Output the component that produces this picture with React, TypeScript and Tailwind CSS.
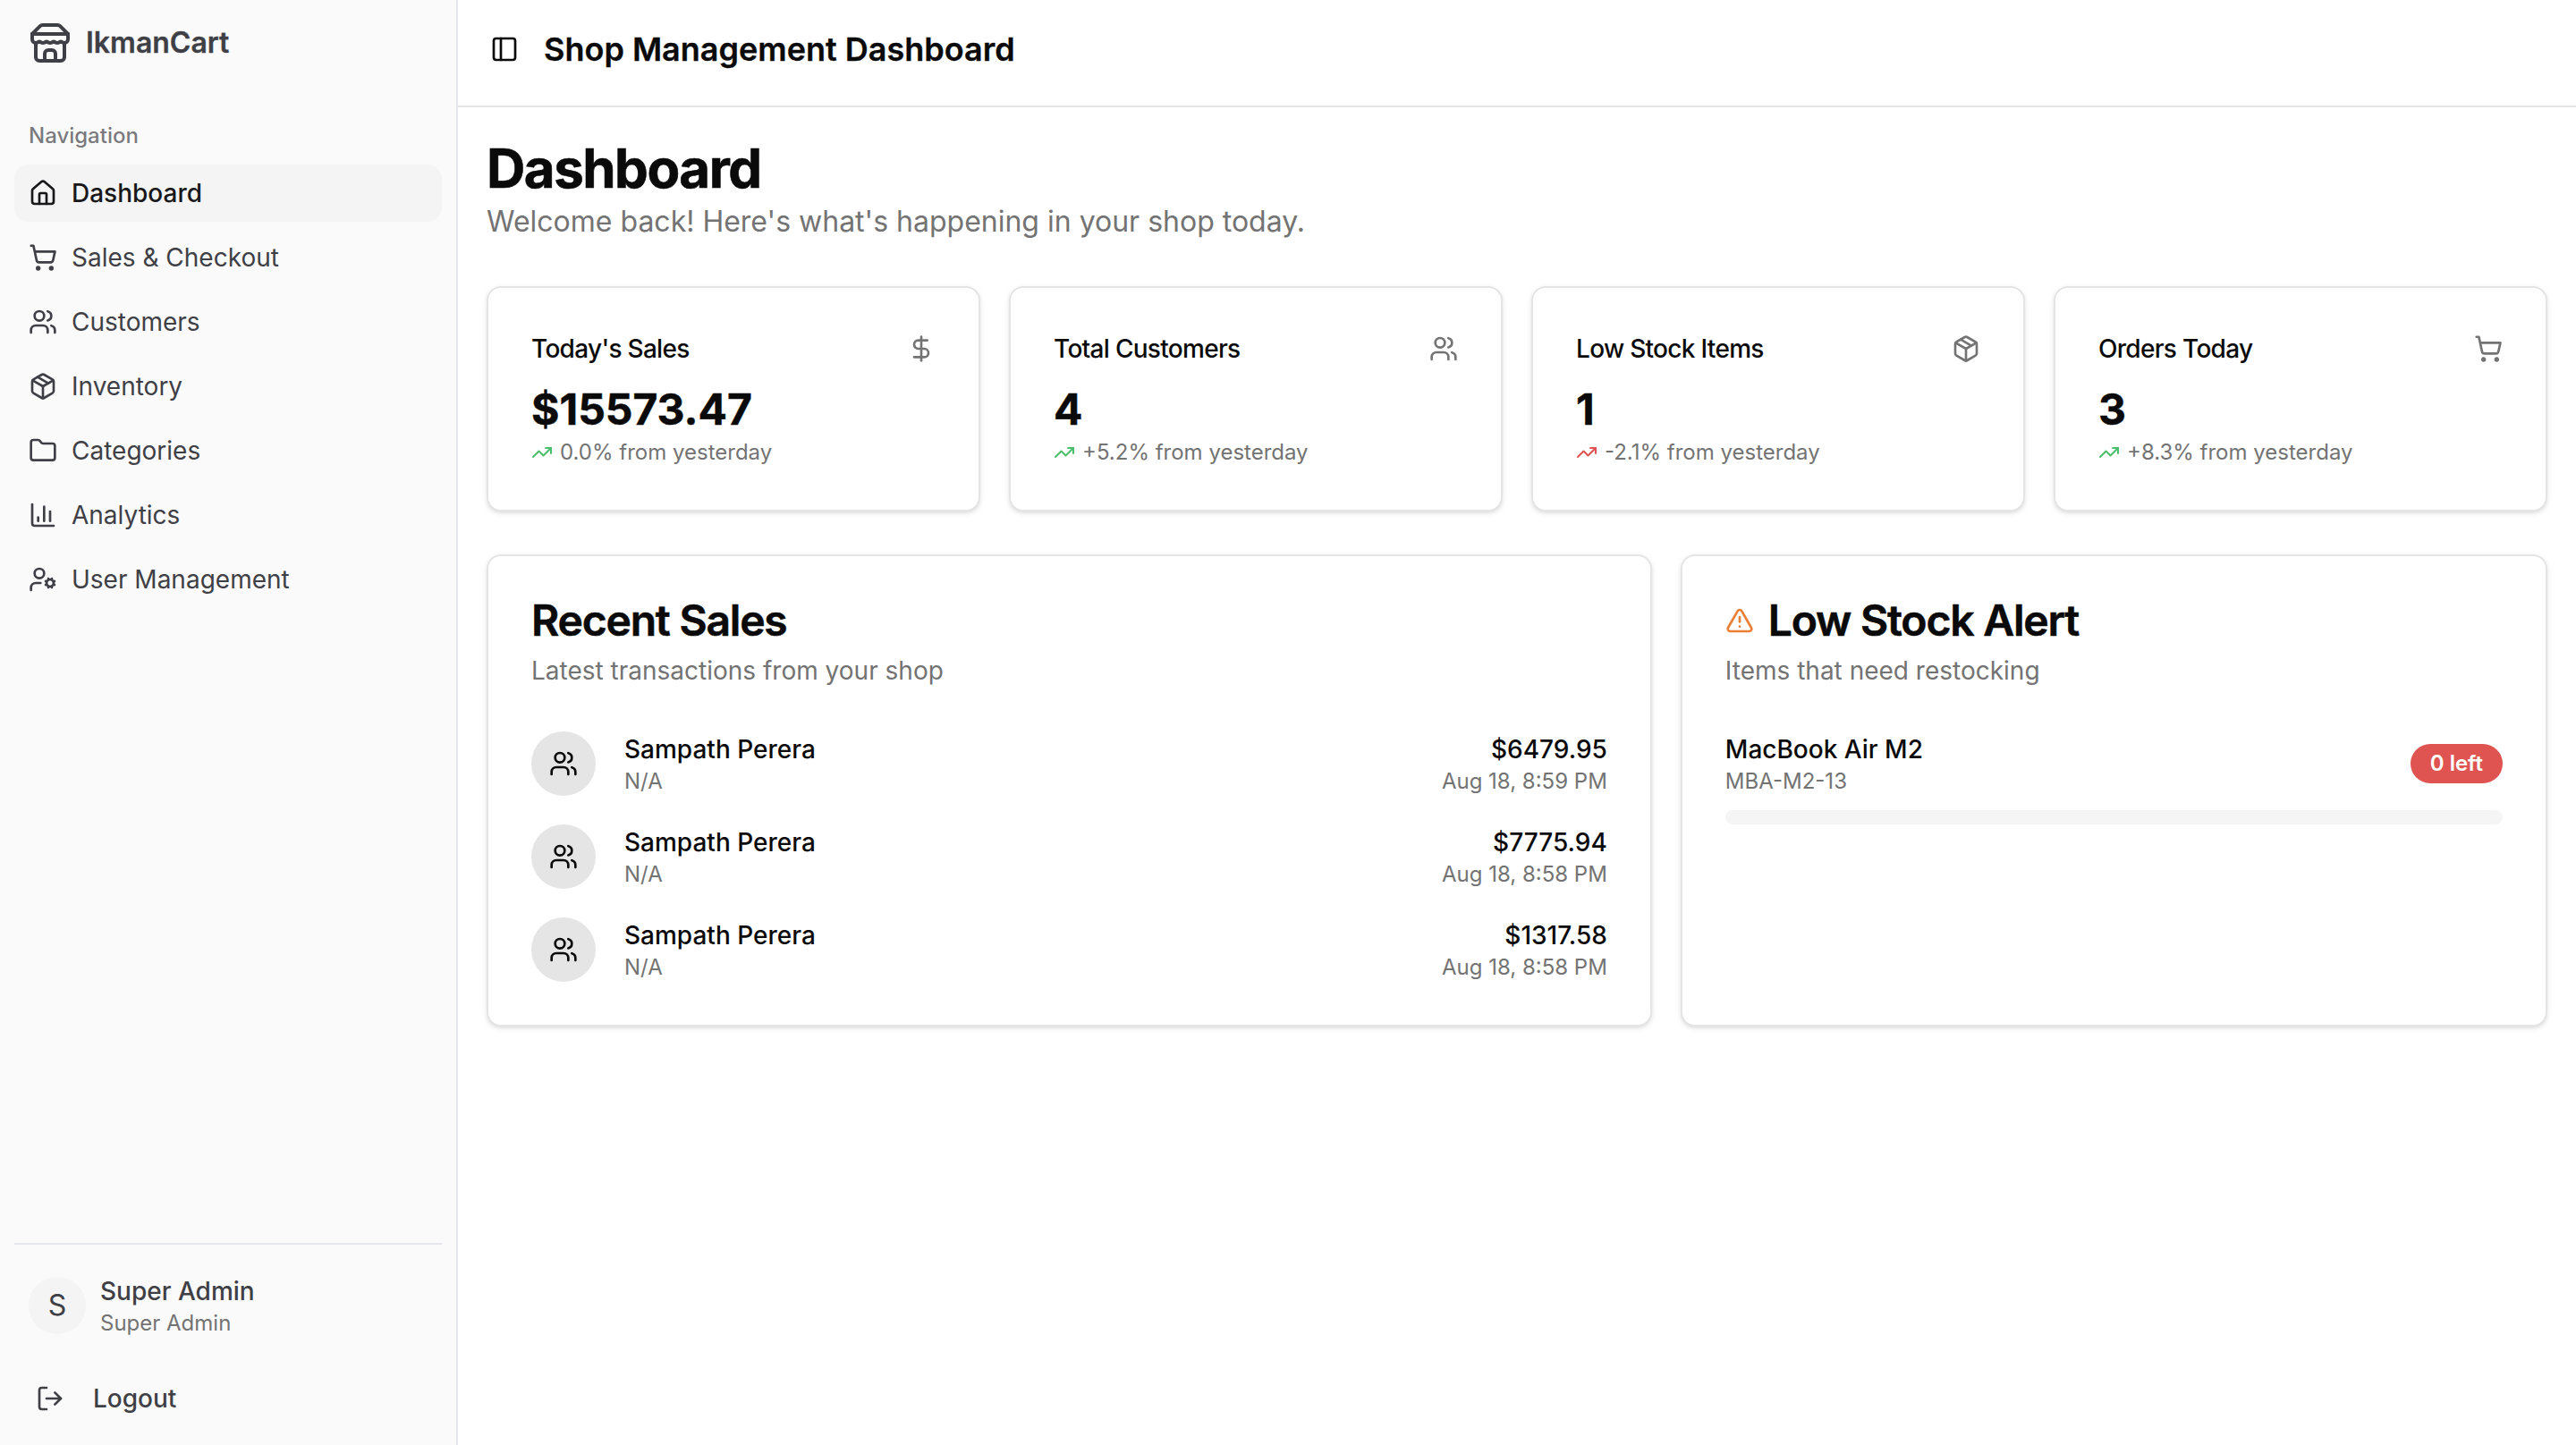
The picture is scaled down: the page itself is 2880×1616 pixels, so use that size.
import { House, ShoppingCart, Users, Package, Folder, ChartColumn, UserCog, LogOut, PanelLeft, DollarSign, TrendingUp, TriangleAlert } from "lucide-react";

const nav = [
  { label: "Dashboard", icon: House, active: true },
  { label: "Sales & Checkout", icon: ShoppingCart },
  { label: "Customers", icon: Users },
  { label: "Inventory", icon: Package },
  { label: "Categories", icon: Folder },
  { label: "Analytics", icon: ChartColumn },
  { label: "User Management", icon: UserCog },
];

const stats = [
  { title: "Today's Sales", value: "$15573.47", icon: DollarSign, trend: "0.0% from yesterday", color: "text-[#4cbf69]" },
  { title: "Total Customers", value: "4", icon: Users, trend: "+5.2% from yesterday", color: "text-[#4cbf69]" },
  { title: "Low Stock Items", value: "1", icon: Package, trend: "-2.1% from yesterday", color: "text-[#df5451]" },
  { title: "Orders Today", value: "3", icon: ShoppingCart, trend: "+8.3% from yesterday", color: "text-[#4cbf69]" },
];

const sales = [
  { amount: "$6479.95", date: "Aug 18, 8:59 PM" },
  { amount: "$7775.94", date: "Aug 18, 8:58 PM" },
  { amount: "$1317.58", date: "Aug 18, 8:58 PM" },
];

function StoreLogo() {
  return (
    <svg viewBox="0 0 24 24" className="w-6 h-6 shrink-0" fill="none" stroke="currentColor" strokeWidth="2" strokeLinecap="round" strokeLinejoin="round">
      <path d="m2 7 4.41-4.41A2 2 0 0 1 7.83 2h8.34a2 2 0 0 1 1.42.59L22 7" />
      <path d="M4 12v8a2 2 0 0 0 2 2h12a2 2 0 0 0 2-2v-8" />
      <path d="M15 22v-4a2 2 0 0 0-2-2h-2a2 2 0 0 0-2 2v4" />
      <path d="M2 7h20" />
      <path d="M22 7v3a2 2 0 0 1-2 2a2.7 2.7 0 0 1-1.59-.63.7.7 0 0 0-.82 0A2.7 2.7 0 0 1 16 12a2.7 2.7 0 0 1-1.59-.63.7.7 0 0 0-.82 0A2.7 2.7 0 0 1 12 12a2.7 2.7 0 0 1-1.59-.63.7.7 0 0 0-.82 0A2.7 2.7 0 0 1 8 12a2.7 2.7 0 0 1-1.59-.63.7.7 0 0 0-.82 0A2.7 2.7 0 0 1 4 12a2 2 0 0 1-2-2V7" />
    </svg>
  );
}

export default function App() {
  return (
    <div className="[zoom:2] w-[1440px] h-[808px] flex overflow-hidden bg-white text-[#0a0a0a] [font-family:Inter,sans-serif] antialiased">
      <aside className="w-64 shrink-0 h-full flex flex-col bg-[#fafafa] border-r border-[#e5e7eb] text-[#3f3f46]">
        <div className="h-[52px] px-4 pt-3 flex items-start gap-2">
          <StoreLogo />
          <span className="text-base leading-6 font-semibold [-webkit-text-stroke:0.15px_currentColor]">IkmanCart</span>
        </div>
        <div className="p-2 flex flex-col">
          <div className="h-8 px-2 flex items-center text-xs font-medium text-[#3f3f46]/70">Navigation</div>
          <nav className="flex flex-col gap-1">
            {nav.map((n) => (
              <div
                key={n.label}
                className={
                  n.active
                    ? "h-8 px-2 rounded-lg flex items-center gap-2 text-sm font-medium bg-[#f4f4f5] text-[#18181b]"
                    : "h-8 px-2 rounded-lg flex items-center gap-2 text-sm"
                }
              >
                <n.icon className="w-4 h-4 shrink-0" />
                <span>{n.label}</span>
              </div>
            ))}
          </nav>
        </div>
        <div className="mt-auto mx-2 mb-2 border-t border-[#e5e7eb] pt-4 flex flex-col gap-4">
          <div className="flex items-center gap-2 px-2">
            <div className="w-8 h-8 rounded-full bg-[#f4f4f5] flex items-center justify-center text-base">S</div>
            <div className="flex flex-col">
              <span className="text-sm font-medium">Super Admin</span>
              <span className="text-xs text-[#737373]">Super Admin</span>
            </div>
          </div>
          <div className="h-9 px-3 flex items-center gap-4 text-sm font-medium">
            <LogOut className="w-4 h-4" />
            <span>Logout</span>
          </div>
        </div>
      </aside>

      <div className="flex-1 min-w-0 flex flex-col">
        <header className="h-[60px] shrink-0 px-4 pb-1 flex items-center gap-2 border-b border-[#e5e5e5]">
          <div className="w-7 h-7 -ml-1 flex items-center justify-center">
            <PanelLeft className="w-4 h-4" />
          </div>
          <h2 className="text-lg font-semibold [-webkit-text-stroke:0.15px_currentColor]">Shop Management Dashboard</h2>
        </header>

        <main className="p-4 flex flex-col">
          <h1 className="text-3xl font-bold tracking-tight [-webkit-text-stroke:0.3px_currentColor]">Dashboard</h1>
          <p className="text-[#737373]">Welcome back! Here's what's happening in your shop today.</p>

          <div className="mt-6 grid grid-cols-4 gap-4">
            {stats.map((s) => (
              <div key={s.title} className="rounded-lg border border-[#e5e5e5] bg-white shadow-sm">
                <div className="px-6 pt-6 pb-2 flex items-center justify-between">
                  <span className="text-sm font-medium tracking-tight">{s.title}</span>
                  <s.icon className="w-4 h-4 text-[#737373]" />
                </div>
                <div className="px-6 pb-6">
                  <div className="text-2xl font-bold [-webkit-text-stroke:0.25px_currentColor]">{s.value}</div>
                  <div className="flex items-center text-xs text-[#737373]">
                    <TrendingUp className={`w-3 h-3 mr-1 ${s.color}`} />
                    <span>{s.trend}</span>
                  </div>
                </div>
              </div>
            ))}
          </div>

          <div className="mt-6 grid grid-cols-7 gap-4">
            <div className="col-span-4 rounded-lg border border-[#e5e5e5] bg-white shadow-sm">
              <div className="p-6 flex flex-col gap-1.5">
                <h3 className="text-2xl leading-none font-semibold tracking-tight [-webkit-text-stroke:0.3px_currentColor]">Recent Sales</h3>
                <p className="text-sm text-[#737373]">Latest transactions from your shop</p>
              </div>
              <div className="px-6 pb-6 flex flex-col gap-4">
                {sales.map((s) => (
                  <div key={s.amount} className="flex items-center">
                    <div className="w-9 h-9 rounded-full bg-[#e5e5e5] flex items-center justify-center">
                      <Users className="w-4 h-4" />
                    </div>
                    <div className="ml-4 flex flex-col">
                      <span className="text-sm font-medium">Sampath Perera</span>
                      <span className="text-xs text-[#737373]">N/A</span>
                    </div>
                    <div className="ml-auto flex flex-col items-end">
                      <span className="text-sm font-medium">{s.amount}</span>
                      <span className="text-xs text-[#737373]">{s.date}</span>
                    </div>
                  </div>
                ))}
              </div>
            </div>

            <div className="col-span-3 rounded-lg border border-[#e5e5e5] bg-white shadow-sm">
              <div className="p-6 flex flex-col gap-1.5">
                <h3 className="text-2xl leading-none font-semibold tracking-tight flex items-center gap-2 [-webkit-text-stroke:0.3px_currentColor]">
                  <TriangleAlert className="w-4 h-4 text-[#ea7f35] [-webkit-text-stroke:0]" />
                  Low Stock Alert
                </h3>
                <p className="text-sm text-[#737373]">Items that need restocking</p>
              </div>
              <div className="px-6 pb-6 flex flex-col gap-2">
                <div className="flex items-center justify-between">
                  <div className="flex flex-col">
                    <span className="text-sm font-medium">MacBook Air M2</span>
                    <span className="text-xs text-[#737373]">MBA-M2-13</span>
                  </div>
                  <span className="rounded-full border border-transparent bg-[#df5451] text-white text-xs font-semibold px-2.5 py-0.5">0 left</span>
                </div>
                <div className="h-2 rounded-full bg-[#f5f5f5]" />
              </div>
            </div>
          </div>
        </main>
      </div>
    </div>
  );
}
